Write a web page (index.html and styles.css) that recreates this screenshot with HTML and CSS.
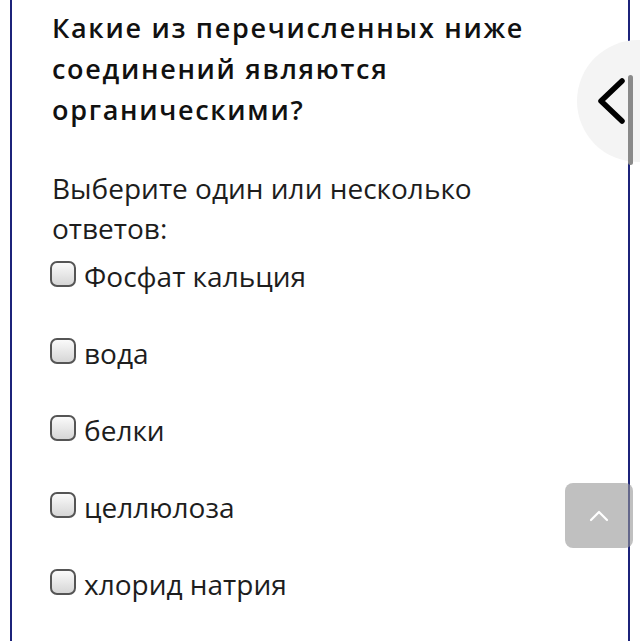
FILE: index.html
```html
<!DOCTYPE html>
<html lang="ru">
<head>
  <meta charset="UTF-8">
  <meta name="viewport" content="width=device-width, initial-scale=1.0">
  <title>Вопрос</title>
  <link rel="stylesheet" href="styles.css">
</head>
<body>
  <div class="question">
    <h2 class="question-text">Какие из перечисленных ниже соединений являются органическими?</h2>
    <p class="prompt">Выберите один или несколько ответов:</p>
    <div class="answers">
      <label class="answer"><input type="checkbox"><span class="box"></span>Фосфат кальция</label>
      <label class="answer"><input type="checkbox"><span class="box"></span>вода</label>
      <label class="answer"><input type="checkbox"><span class="box"></span>белки</label>
      <label class="answer"><input type="checkbox"><span class="box"></span>целлюлоза</label>
      <label class="answer"><input type="checkbox"><span class="box"></span>хлорид натрия</label>
    </div>
  </div>

  <button class="drawer-toggle" aria-label="Назад">
    <svg width="30" height="46" viewBox="0 0 30 46">
      <polyline points="25,3 4,23 25,43" fill="none" stroke="#000" stroke-width="5.5" stroke-linecap="round" stroke-linejoin="round"/>
    </svg>
  </button>
  <div class="scroll-thumb"></div>

  <button class="to-top" aria-label="Наверх">
    <svg width="20" height="12" viewBox="0 0 20 12">
      <polyline points="2,10 10,2 18,10" fill="none" stroke="#fff" stroke-width="2.2" stroke-linecap="round" stroke-linejoin="round"/>
    </svg>
  </button>
</body>
</html>
```

FILE: styles.css
```css
body {
  margin: 0;
  padding: 0;
  background-color: #ffffff;
  color: #1d1d1d;
  font-family: "Open Sans", "Noto Sans", sans-serif;
  overflow: hidden;
}

.question {
  margin: 0 10px;
  min-height: 641px;
  border-left: 2px solid #1c237a;
  border-right: 2px solid #1c237a;
  padding: 7px 90px 0 40px;
  box-sizing: border-box;
}

.question-text {
  margin: 0;
  font-size: 27px;
  font-weight: 600;
  line-height: 41px;
  letter-spacing: 1.7px;
  color: #111;
}

.prompt {
  margin: 38px 0 0 0;
  font-size: 28px;
  font-weight: 400;
  line-height: 40px;
}

.answers {
  display: flex;
  flex-direction: column;
  gap: 37px;
  margin-top: 8px;
}

.answer {
  display: flex;
  align-items: center;
  font-size: 28px;
  line-height: 40px;
}

.answer input {
  display: none;
}

.box {
  width: 22px;
  height: 22px;
  margin: 0 8px 4px -2px;
  border: 2px solid #555;
  border-radius: 7px;
  background: linear-gradient(#fafafa, #d6d6d6);
  flex: 0 0 auto;
}

.drawer-toggle {
  position: absolute;
  left: 577px;
  top: 40px;
  width: 63px;
  height: 122px;
  border: none;
  border-radius: 61px 0 0 61px;
  background-color: #f4f4f4;
  padding: 0 0 0 20px;
  text-align: left;
}

.drawer-toggle svg {
  display: block;
}

.scroll-thumb {
  position: absolute;
  left: 628px;
  top: 75px;
  width: 5px;
  height: 90px;
  border-radius: 3px;
  background-color: #8a8a8a;
}

.to-top {
  position: absolute;
  left: 565px;
  top: 483px;
  width: 68px;
  height: 65px;
  border: none;
  border-radius: 8px;
  background-color: rgba(150, 150, 150, 0.6);
  display: flex;
  align-items: center;
  justify-content: center;
}
```
